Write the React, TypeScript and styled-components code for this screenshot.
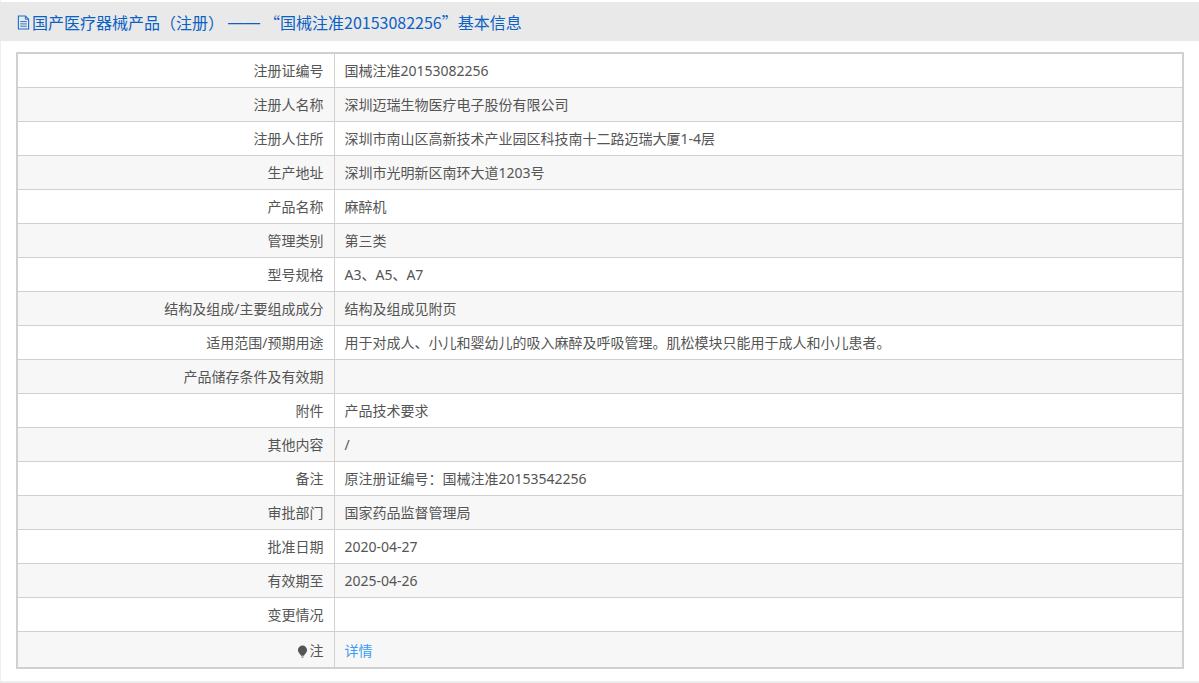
import React, { FC } from 'react';
import styled, { createGlobalStyle } from 'styled-components';

const rows: [string, string][] = [
    ['注册证编号', '国械注准20153082256'],
    ['注册人名称', '深圳迈瑞生物医疗电子股份有限公司'],
    ['注册人住所', '深圳市南山区高新技术产业园区科技南十二路迈瑞大厦1-4层'],
    ['生产地址', '深圳市光明新区南环大道1203号'],
    ['产品名称', '麻醉机'],
    ['管理类别', '第三类'],
    ['型号规格', 'A3、A5、A7'],
    ['结构及组成/主要组成成分', '结构及组成见附页'],
    ['适用范围/预期用途', '用于对成人、小儿和婴幼儿的吸入麻醉及呼吸管理。肌松模块只能用于成人和小儿患者。'],
    ['产品储存条件及有效期', ''],
    ['附件', '产品技术要求'],
    ['其他内容', '/'],
    ['备注', '原注册证编号：国械注准20153542256'],
    ['审批部门', '国家药品监督管理局'],
    ['批准日期', '2020-04-27'],
    ['有效期至', '2025-04-26'],
    ['变更情况', ''],
];

const App: FC = () => {
    return (
        <>
            <GlobalStyle />
            <Panel>
                <PanelHeading>
                    <FileIcon viewBox="0 0 14 16">
                        <path d="M1.5 1h7.5l3.5 3.5V15h-11z" fill="none" stroke="#1c6fd0" strokeWidth="1.2" />
                        <path d="M9 1v3.5h3.5M3.5 7h7M3.5 9.5h7M3.5 12h7" fill="none" stroke="#1c6fd0" strokeWidth="1" />
                    </FileIcon>
                    国产医疗器械产品（注册）
                    <Dash>——</Dash>
                    “国械注准20153082256”基本信息
                </PanelHeading>
                <PanelBody>
                    <InfoTable>
                        <tbody>
                            {rows.map(([label, value]) => (
                                <tr key={label}>
                                    <LabelCell>{label}</LabelCell>
                                    <ValueCell>{value}</ValueCell>
                                </tr>
                            ))}
                            <tr>
                                <LabelCell>
                                    <BulbIcon viewBox="0 0 12 14">
                                        <path d="M6 0.5a5 5 0 0 1 5 5c0 2.6-2.6 4-3.5 6h-3C3.600 9.500 1 8.100 1 5.500a5 5 0 0 1 5-5z" fill="#555" />
                                        <path d="M4.500 12.500h3l-.8 1.200H5.300z" fill="#777" />
                                    </BulbIcon>
                                    注
                                </LabelCell>
                                <ValueCell><DetailLink href="#">详情</DetailLink></ValueCell>
                            </tr>
                        </tbody>
                    </InfoTable>
                </PanelBody>
            </Panel>
        </>
    );
};

const GlobalStyle = createGlobalStyle`
    html, body {
        margin: 0;
        padding: 0;
        background: #fff;
        font-family: "Noto Sans", "Noto Sans CJK SC", sans-serif;
    }
`;

const Panel = styled.div`
    box-sizing: border-box;
    width: 1199px;
    height: 683px;
    padding-top: 2px;
    background: #fff;
    border-left: 1px solid #eee;
    border-bottom: 2px solid #eee;
    border-top: 0;
`;

const PanelHeading = styled.div`
    box-sizing: border-box;
    height: 39px;
    margin-left: -1px;
    padding: 2px 17px 0;
    display: flex;
    align-items: center;
    background: #e9e9e9;
    color: #0b62c4;
    font-family: "Noto Sans CJK SC", sans-serif;
    font-size: 16px;
    line-height: 37px;
    white-space: nowrap;
`;

const FileIcon = styled.svg`
    width: 13px;
    height: 15px;
    margin-right: 2px;
    flex: none;
`;

const Dash = styled.span`
    margin: 0 4px 0 4px;
    font-family: "Liberation Sans", sans-serif;
`;

const PanelBody = styled.div`
    padding: 11px 14px 0 15px;
`;

const InfoTable = styled.table`
    box-sizing: border-box;
    width: 1168px;
    border-collapse: collapse;
    table-layout: fixed;
    border: 2px solid #d0d0d0;
    font-size: 14px;
    color: #555;

    tr {
        height: 34px;
        background: #fff;
    }
    tr:nth-child(even) {
        background: #f7f7f7;
    }
    tr:last-child {
        height: 37px;
    }
    tr:last-child td {
        padding-top: 2px;
    }
`;

const LabelCell = styled.td`
    box-sizing: border-box;
    width: 317px;
    padding: 0 10px;
    text-align: right;
    border: 1px solid #d0d0d0;
`;

const ValueCell = styled.td`
    box-sizing: border-box;
    padding: 0 10px;
    border: 1px solid #d0d0d0;
`;

const BulbIcon = styled.svg`
    width: 11px;
    height: 13px;
    margin-right: 2px;
    vertical-align: -2px;
`;

const DetailLink = styled.a`
    color: #3a9bf4;
    text-decoration: none;
`;

export default App;
